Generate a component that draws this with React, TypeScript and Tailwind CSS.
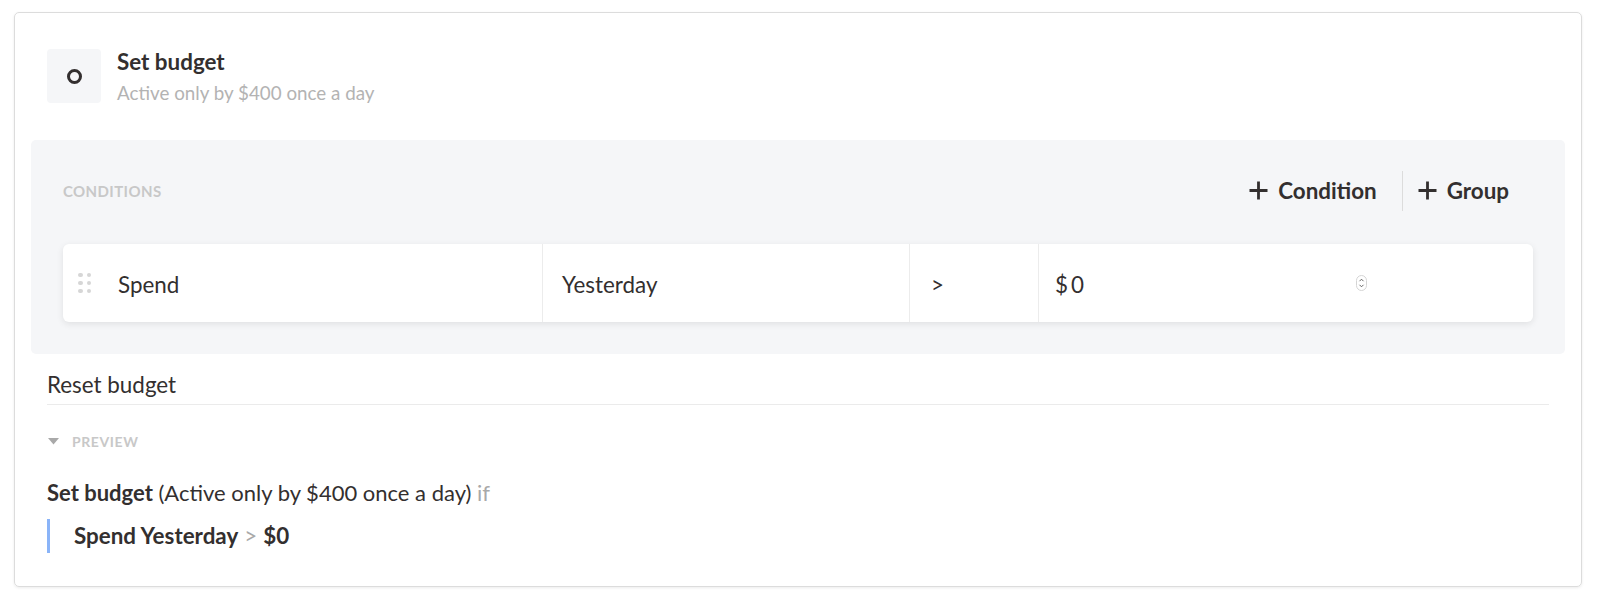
import React from "react";

const font = { fontFamily: "Lato, 'Noto Sans', sans-serif" };

function PlusIcon() {
    return (
        <svg width="19" height="19" viewBox="0 0 19 19" className="shrink-0">
            <path d="M9.5 0.5v18M0.5 9.5h18" stroke="#332f2f" strokeWidth="2.8" />
        </svg>
    );
}

function DragHandle() {
    return (
        <div className="grid grid-cols-2 gap-x-[4px] gap-y-[3.5px]">
            {[0, 1, 2, 3, 4, 5].map((i) => (
                <span key={i} className="block w-[4.5px] h-[4.5px] rounded-full bg-[#d6d6d6]" />
            ))}
        </div>
    );
}

function Spinner() {
    return (
        <svg width="11" height="16" viewBox="0 0 11 16">
            <rect x="0.5" y="0.5" width="10" height="15" rx="5" fill="#fff" stroke="#d4d4d4" />
            <path d="M3.5 6.2l2-2 2 2M3.5 9.8l2 2 2-2" fill="none" stroke="#555" strokeWidth="0.9" />
        </svg>
    );
}

export default function App() {
    return <div className="bg-white w-[1600px] h-[600px] pt-3 pl-[14px] pr-[18px]" style={font}>
        <div className="border border-[#dcdcdc] rounded-[5px] shadow-[0_1px_3px_rgba(0,0,0,0.08)] px-4 pt-[36px] pb-[33px] text-[#332f2f]">
            <div className="flex items-start pl-4 gap-4 h-[54px]">
                <div className="w-[54px] h-[54px] rounded-[4px] bg-[#f5f6f8] flex items-center justify-center">
                    <span className="block w-[15px] h-[15px] rounded-full border-[3px] border-[#332f2f]" />
                </div>
                <div className="flex flex-col -mt-[1px]">
                    <span className="text-[22.4px] font-bold leading-[28px]">Set budget</span>
                    <span className="mt-[4px] text-[18.8px] leading-[26px] text-[#b3b3b3]">Active only by $400 once a day</span>
                </div>
            </div>

            <div className="mt-[37px] bg-[#f5f6f8] rounded-[5px] px-8 pt-[31px] pb-[32px]">
                <div className="flex items-center h-[40px]">
                    <span className="text-[15px] font-bold tracking-[0.4px] text-[#c8c8c8]">CONDITIONS</span>
                    <div className="ml-auto flex items-center h-full">
                        <button className="flex items-center gap-[10px] text-[22.4px] font-bold">
                            <PlusIcon />
                            Condition
                        </button>
                        <span className="ml-[25px] w-px h-full bg-[#dcdcdc]" />
                        <button className="ml-[15px] mr-[24px] flex items-center gap-[10px] text-[22.4px] font-bold">
                            <PlusIcon />
                            Group
                        </button>
                    </div>
                </div>

                <div className="mt-[33px] h-[78px] bg-white rounded-[6px] shadow-[0_2px_7px_rgba(0,0,0,0.09)] flex text-[22.4px]">
                    <div className="w-[480px] flex items-center pl-[15px] border-r border-[#ececec]">
                        <DragHandle />
                        <span className="ml-[27px] pt-[3px]">Spend</span>
                    </div>
                    <div className="w-[367px] flex items-center pl-[19px] pt-[3px] border-r border-[#ececec]">
                        Yesterday
                    </div>
                    <div className="w-[129px] flex items-center pl-[21px] pt-[3px] border-r border-[#ececec]">
                        &gt;
                    </div>
                    <div className="flex-1 flex items-center pl-[16px]">
                        <span className="pt-[3px]">$</span>
                        <span className="ml-[3px] pt-[3px]">0</span>
                        <span className="ml-[272px] flex"><Spinner /></span>
                    </div>
                </div>
            </div>

            <div className="px-4">
                <div className="pt-[15px] pb-[3px] border-b border-[#ebebeb] text-[22.4px] leading-[32px]">
                    Reset budget
                </div>

                <div className="mt-[25px] flex items-center h-[22px]">
                    <svg width="11" height="7" viewBox="0 0 11 7" className="ml-px">
                        <path d="M0 0h11L5.5 6.5z" fill="#a9a9a9" />
                    </svg>
                    <span className="ml-[13px] text-[14px] font-bold tracking-[0.6px] text-[#c8c8c8]">PREVIEW</span>
                </div>

                <div className="mt-[25px] text-[22px] leading-[32px]">
                    <span className="font-bold">Set budget</span> (Active only by $400 once a day) <span className="text-[#a9a9a9]">if</span>
                </div>

                <div className="mt-[10px] h-[34px] border-l-[3px] border-[#8ab4f8] pl-[24px] flex items-center text-[22.4px] font-bold">
                    Spend Yesterday <span className="font-normal text-[#a9a9a9] mx-[6px]">&gt;</span> $0
                </div>
            </div>
        </div>
    </div>
}
